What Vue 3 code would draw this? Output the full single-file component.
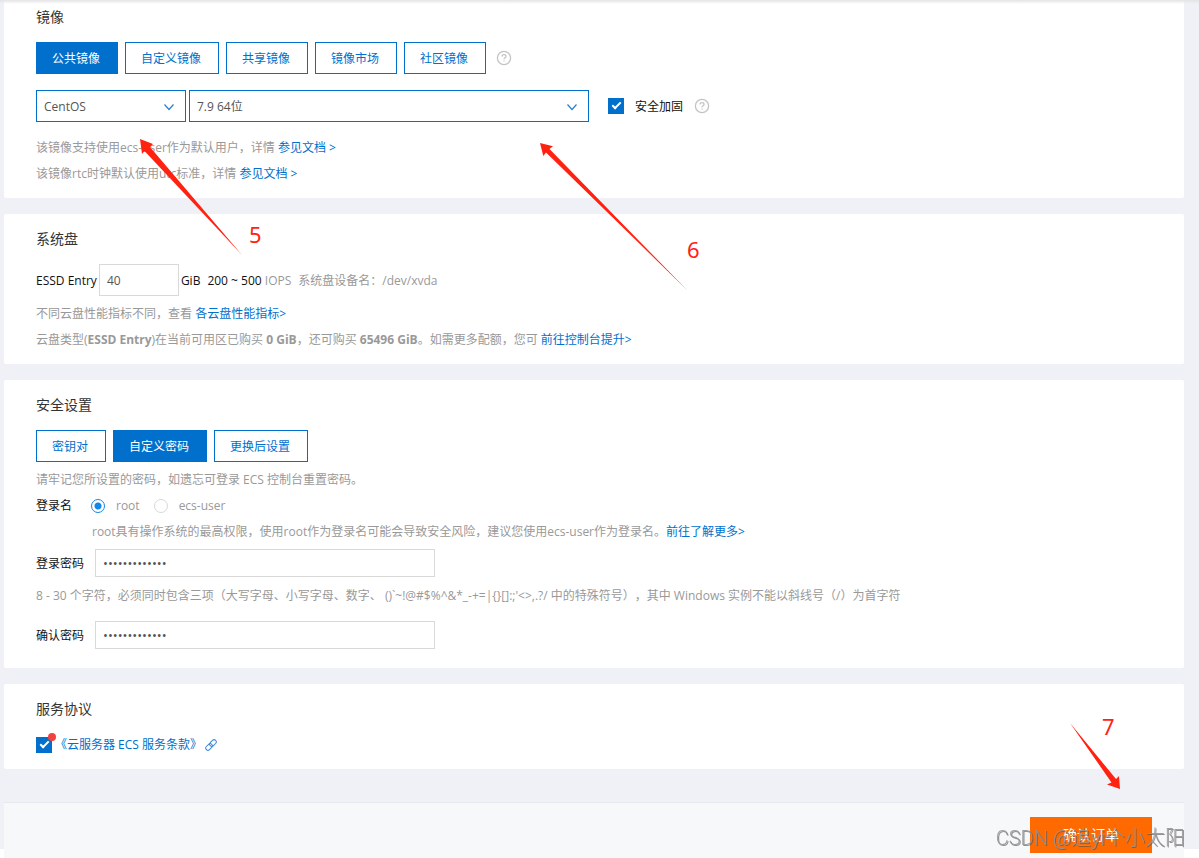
<script setup>
import { ref } from 'vue'

const imageTypes = ['公共镜像', '自定义镜像', '共享镜像', '镜像市场', '社区镜像']
const imageType = ref('公共镜像')
const authTypes = ['密钥对', '自定义密码', '更换后设置']
const authType = ref('自定义密码')
const system = ref('CentOS')
const version = ref('7.9 64位')
const hardening = ref(true)
const diskSize = ref('40')
const loginName = ref('root')
const password = ref('Passw0rd-2023')
const confirmation = ref('Passw0rd-2023')
const agreed = ref(true)
const charset = "()`~!@#$%^&*_-+=|{}[]:;'<>,.?/"
</script>

<template>
  <div class="page">
    <main class="panels">
      <section class="panel first">
        <h2>镜像</h2>
        <div class="tabs">
          <button v-for="t in imageTypes" :key="t" type="button" :class="{ on: t === imageType }" @click="imageType = t">{{ t }}</button>
          <svg class="help" viewBox="0 0 16 16" aria-hidden="true">
            <circle cx="8" cy="8" r="6.6" />
            <path d="M6 6.6C6 5.3 6.9 4.6 8 4.6s2 .7 2 1.8c0 1.4-2 1.5-2 2.9M8 10.4v1.2" />
          </svg>
        </div>
        <div class="selects">
          <span class="select small">
            <select v-model="system" aria-label="操作系统"><option>CentOS</option></select>
            <svg viewBox="0 0 12 12" aria-hidden="true"><path d="M1.5 3.5 6 8.5l4.5-5" /></svg>
          </span>
          <span class="select large">
            <select v-model="version" aria-label="版本"><option>7.9 64位</option></select>
            <svg viewBox="0 0 12 12" aria-hidden="true"><path d="M1.5 3.5 6 8.5l4.5-5" /></svg>
          </span>
          <label class="hardening"><input v-model="hardening" class="check" type="checkbox"><span>安全加固</span></label>
          <svg class="help" viewBox="0 0 16 16" aria-hidden="true">
            <circle cx="8" cy="8" r="6.6" />
            <path d="M6 6.6C6 5.3 6.9 4.6 8 4.6s2 .7 2 1.8c0 1.4-2 1.5-2 2.9M8 10.4v1.2" />
          </svg>
        </div>
        <div class="notes image-notes">
          <p>该镜像支持使用ecs-user作为默认用户，详情 <a href="#">参见文档 &gt;</a></p>
          <p>该镜像rtc时钟默认使用utc标准，详情 <a href="#">参见文档 &gt;</a></p>
        </div>
      </section>

      <section class="panel">
        <h2>系统盘</h2>
        <div class="disk">
          <label for="disk-size">ESSD Entry</label>
          <input id="disk-size" v-model="diskSize" class="field" type="text">
          <span>GiB</span>
          <span class="iops">200 ~ 500 <i>IOPS</i></span>
          <span><i>系统盘设备名：/dev/xvda</i></span>
        </div>
        <div class="notes">
          <p>不同云盘性能指标不同，查看 <a href="#">各云盘性能指标&gt;</a></p>
          <p>云盘类型(<b>ESSD Entry</b>)在当前可用区已购买 <b>0 GiB</b>，还可购买 <b>65496 GiB</b>。如需更多配额，您可 <a href="#">前往控制台提升&gt;</a></p>
        </div>
      </section>

      <section class="panel security">
        <h2>安全设置</h2>
        <div class="tabs">
          <button v-for="t in authTypes" :key="t" type="button" :class="{ on: t === authType }" @click="authType = t">{{ t }}</button>
        </div>
        <div class="notes">
          <p>请牢记您所设置的密码，如遗忘可登录 ECS 控制台重置密码。</p>
          <div class="login" role="radiogroup" aria-labelledby="login-name">
            <span id="login-name">登录名</span>
            <label><input v-model="loginName" type="radio" value="root">root</label>
            <label><input v-model="loginName" type="radio" value="ecs-user">ecs-user</label>
          </div>
          <p class="indent">root具有操作系统的最高权限，使用root作为登录名可能会导致安全风险，建议您使用ecs-user作为登录名。<a href="#">前往了解更多&gt;</a></p>
        </div>
        <div class="password">
          <label for="password">登录密码</label>
          <input id="password" v-model="password" class="field" type="password">
        </div>
        <p class="rule">8 - 30 个字符，必须同时包含三项（大写字母、小写字母、数字、 {{ charset }} 中的特殊符号），其中 Windows 实例不能以斜线号（/）为首字符</p>
        <div class="password">
          <label for="confirmation">确认密码</label>
          <input id="confirmation" v-model="confirmation" class="field" type="password">
        </div>
      </section>

      <section class="panel">
        <h2>服务协议</h2>
        <div class="agreement">
          <span class="dotted"><input v-model="agreed" class="check" type="checkbox" aria-label="同意服务条款"></span>
          <a href="#">《云服务器 ECS 服务条款》
            <svg viewBox="0 0 12 12" aria-hidden="true">
              <g transform="rotate(-45 6 6)">
                <rect x="-0.5" y="3.8" width="7.5" height="4.4" rx="2.2" />
                <rect x="5" y="3.8" width="7.5" height="4.4" rx="2.2" />
              </g>
            </svg>
          </a>
        </div>
      </section>
    </main>

    <footer class="bar"><button type="button">确认订单</button></footer>

    <div class="mark mark5">
      <svg viewBox="0 0 104 118"><path d="M0 0 13 5 10 8 102 116 4.500 12 2 15Z" /></svg>
      <span>5</span>
    </div>
    <div class="mark mark6">
      <svg viewBox="0 0 150 150"><path d="M0 0 13 3.300 9.500 6 147 147 6 9.500 3.300 13Z" /></svg>
      <span>6</span>
    </div>
    <div class="mark mark7">
      <svg viewBox="0 0 50 66"><path d="M50 66 37 61.500 41.500 59.500 0 0 46 56 49 53Z" /></svg>
      <span>7</span>
    </div>
    <div class="watermark">CSDN @追yi个小太阳</div>
  </div>
</template>

<style>
body { margin: 0; background: #fff; }
</style>

<style scoped>
.page {
  position: relative;
  box-sizing: border-box;
  min-height: calc(100vh - 9px);
  padding: 0 15px 80px 4px;
  background: #eff1f6;
  color: #111;
  font: 12px/26px "Open Sans", "Noto Sans CJK SC", sans-serif;
  text-spacing-trim: space-all;
}
.page::before {
  content: "";
  position: absolute;
  inset: 0 0 auto;
  height: 4px;
  background: linear-gradient(#e4e4e6, rgba(240, 240, 242, 0));
}
h2, p { margin: 0; font-weight: 400; }
h2 { margin-bottom: 15px; color: #333; font-size: 14px; line-height: 20px; }
i { color: #999; font-style: normal; }
a { color: #0070cc; text-decoration: none; }
button, input, select { box-sizing: border-box; margin: 0; font: inherit; }
.panels { display: flex; flex-direction: column; gap: 16px; }
.panel { padding: 15px 32px 11px; border-radius: 2px; background: #fff; }
.first { padding-top: 7px; }
.security { padding-bottom: 19px; }
.tabs { display: flex; align-items: center; gap: 7px; }
.tabs button {
  height: 32px;
  padding: 2px 17px 0 15px;
  border: 1px solid #0070cc;
  background: #fff;
  color: #0070cc;
  line-height: 28px;
}
.tabs button.on { background: #0070cc; color: #fff; }
.help { flex: none; width: 16px; height: 16px; margin-left: 3px; fill: none; stroke: #c4c4c4; stroke-width: 1.300; }
.selects { display: flex; align-items: center; gap: 3px; margin-top: 16px; }
.select { position: relative; display: block; }
.small { width: 150px; }
.large { width: 400px; }
.select select {
  appearance: none;
  display: block;
  width: 100%;
  height: 32px;
  padding: 2px 30px 0 7px;
  border: 1px solid #0070cc;
  border-radius: 0;
  background: #fff;
  color: #555;
}
.select svg { position: absolute; top: 11px; right: 11px; width: 12px; height: 12px; fill: none; stroke: #2b7fd0; stroke-width: 1.200; pointer-events: none; }
.hardening { display: flex; align-items: center; gap: 11px; margin-left: 16px; }
.hardening span { padding-top: 2px; }
.selects .help { margin-left: 8px; }
.check {
  appearance: none;
  display: block;
  width: 16px;
  height: 16px;
  border: 1px solid #0070cc;
  background: #fff;
}
.check:checked { background: #0070cc; }
.check:checked::before {
  content: "";
  display: block;
  width: 7px;
  height: 3px;
  margin: 3px;
  border: solid #fff;
  border-width: 0 0 2px 2px;
  transform: rotate(-45deg);
}
.notes { margin-top: 5px; color: #999; }
.image-notes { margin-top: 13px; }
.disk { display: flex; align-items: center; gap: 2px; }
.disk label, .disk span { padding-top: 2px; }
.disk .field { width: 80px; height: 32px; }
.disk .iops { margin: 0 5px; }
.field { padding: 0 7px; border: 1px solid #d9d9d9; border-radius: 0; background: #fff; color: #555; outline: 0; }
.login { display: flex; align-items: center; }
.login > span { width: 55px; color: #111; }
.login label { display: flex; align-items: center; gap: 11px; margin-right: 14px; }
.login input { appearance: none; width: 14px; height: 14px; border: 1px solid #d9d9d9; border-radius: 50%; background: #fff; }
.login input:checked { border-color: #1188e8; background: radial-gradient(circle, #1188e8 3px, #fff 4px); }
.indent { padding-left: 56px; }
.password { display: flex; align-items: center; gap: 11px; margin-top: 4px; }
.password label { padding-top: 2px; }
.password .field { width: 340px; height: 28px; font-size: 13px; }
.rule { margin: 6px 0 12px; color: #999; }
.agreement { display: flex; align-items: center; gap: 3px; margin-top: -2px; }
.dotted { position: relative; }
.dotted::after { content: ""; position: absolute; top: -4px; right: -4px; width: 8px; height: 8px; border-radius: 50%; background: #f5413b; }
.agreement a { display: flex; align-items: center; gap: 3px; }
.agreement svg { width: 12px; height: 12px; fill: none; stroke: #3a8ad8; stroke-width: 1; }
.bar {
  position: fixed;
  right: 15px;
  bottom: 0;
  left: 4px;
  display: flex;
  justify-content: flex-end;
  padding: 14px 32px 5px;
  border-top: 1px solid #e6e8eb;
  background: #f7f8fa;
}
.bar button { width: 122px; height: 36px; border: 0; background: #ff6a00; color: #fff; font-size: 14px; }
.mark { position: absolute; color: #ff2211; font: 22px/26px "Noto Sans", sans-serif; pointer-events: none; }
.mark svg { display: block; width: 100%; height: 100%; fill: #ff2211; }
.mark span { position: absolute; }
.mark5 { top: 139px; left: 140px; width: 104px; height: 118px; }
.mark5 span { top: 82px; left: 109px; }
.mark6 { top: 143px; left: 540px; width: 150px; height: 150px; }
.mark6 span { top: 93px; left: 147px; }
.mark7 { top: 723px; right: 79px; width: 50px; height: 66px; }
.mark7 span { top: -10px; left: 32px; }
.watermark {
  position: fixed;
  right: 14px;
  bottom: 5px;
  color: rgba(150, 150, 150, .9);
  font: 300 20px/30px Roboto, "Noto Sans CJK SC", sans-serif;
  text-shadow: 1px 1px 0 rgba(80, 80, 80, .6);
  pointer-events: none;
}
</style>
